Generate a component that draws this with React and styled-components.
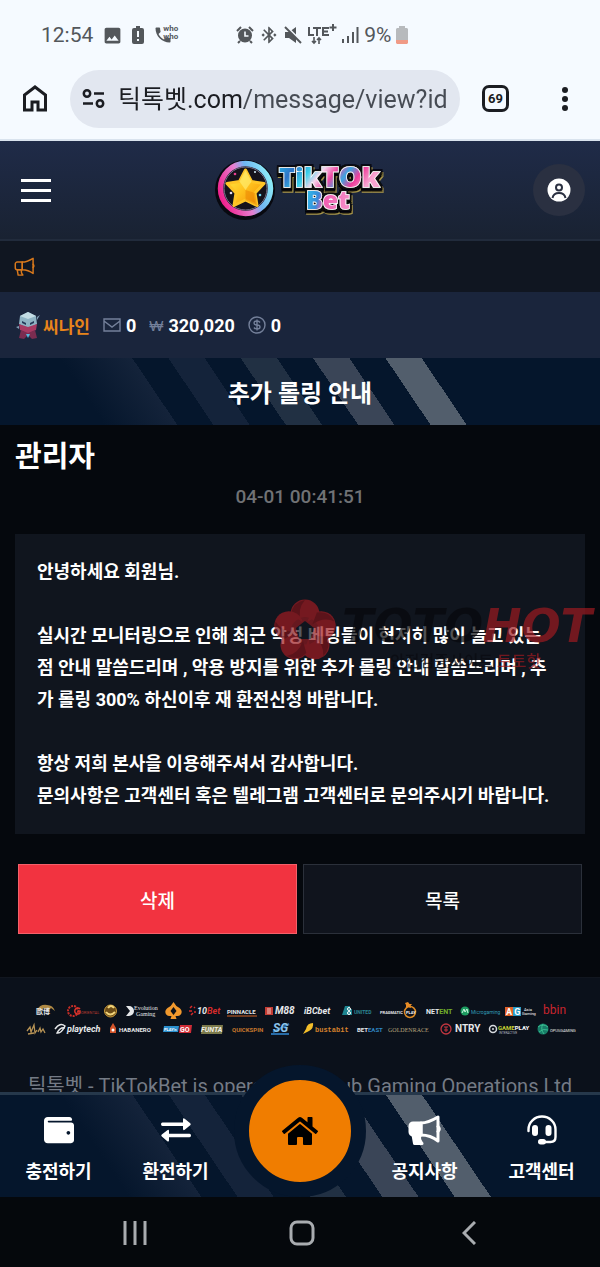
import styled, { createGlobalStyle, css } from 'styled-components';
import { MdBluetoothConnected, MdImage, MdPhone } from 'react-icons/md';
import { FaHome, FaWallet } from 'react-icons/fa';

const GlobalStyle = createGlobalStyle`
  * {
    box-sizing: border-box;
  }

  body {
    margin: 0;
    background: #05080d;
    color: #ffffff;
    font-family: Roboto, "Noto Sans CJK KR", sans-serif;
  }

  button {
    padding: 0;
    border: 0;
    background: none;
    color: inherit;
    font: inherit;
    cursor: pointer;
  }

  a {
    color: inherit;
    text-decoration: none;
  }

  svg {
    display: block;
    flex: none;
  }
`;

// slanted stripes, offset depends on the height of the bar
const stripes = (offset) => css`
  background: linear-gradient(
    56deg,
    #05162c ${offset - 60}px,
    #14233a ${offset}px, #05162c ${offset}px,
    #05162c ${offset + 30}px, #14233a ${offset + 30}px,
    #14233a ${offset + 60}px, #05162c ${offset + 60}px,
    #05162c ${offset + 90}px, #213043 ${offset + 90}px,
    #213043 ${offset + 120}px, #05162c ${offset + 120}px,
    #05162c ${offset + 150}px, #3a4557 ${offset + 150}px,
    #3a4557 ${offset + 180}px, #05162c ${offset + 180}px,
    #05162c ${offset + 210}px, #525e6c ${offset + 210}px,
    #525e6c ${offset + 240}px, #05162c ${offset + 240}px
  );
`;

const Page = styled.div`
  display: flex;
  flex-direction: column;
  min-height: 100vh;
`;

const StatusBar = styled.div`
  display: flex;
  align-items: center;
  height: 70px;
  padding: 0 41px;
  background: #f5faff;
  color: #53575b;
  font-size: 21px;
`;

const StatusGroup = styled.div`
  display: flex;
  align-items: center;
  gap: ${(props) => props.$gap};
  margin-right: 58px;
`;

const CallIcon = styled.span`
  display: flex;
  color: #53575b;
  font-size: 8px;
  font-weight: 700;
  line-height: 8px;

  span {
    margin-left: -10px;
  }
`;

const BrowserBar = styled.div`
  display: flex;
  align-items: center;
  height: 71px;
  padding: 0 32px 12px 23px;
  background: #f5faff;
  border-bottom: 2px solid #d9e3ee;
  color: #1b1d22;
`;

const AddressBox = styled.label`
  display: flex;
  flex: 1;
  align-items: center;
  gap: 13px;
  min-width: 0;
  height: 58px;
  margin: 0 22px 0 23px;
  padding: 0 11px 0 12px;
  border-radius: 29px;
  background: #e2e7f0;
`;

const AddressInput = styled.input`
  flex: 1;
  min-width: 0;
  height: 40px;
  padding: 0 0 4px;
  border: 0;
  outline: 0;
  background: linear-gradient(90deg, #1b1d22 124px, #464b53 124px);
  background-clip: text;
  color: transparent;
  font-family: inherit;
  font-size: 25px;
`;

const TabCount = styled.button`
  width: 27px;
  height: 27px;
  margin-right: 53px;
  border: 3px solid #1b1d22;
  border-radius: 7px;
  font-size: 13px;
  font-weight: 700;
  line-height: 20px;
`;

const Header = styled.header`
  display: flex;
  align-items: center;
  justify-content: space-between;
  height: 100px;
  padding: 0 15px;
  border-bottom: 2px solid #212b3c;
  background: linear-gradient(#1f2b48, #192232);
`;

const MenuButton = styled.button`
  display: flex;
  flex-direction: column;
  gap: 7px;
  width: 52px;
  padding-left: 6px;

  span {
    width: 30px;
    height: 3px;
    background: #ffffff;
  }
`;

const ProfileButton = styled.button`
  display: flex;
  align-items: center;
  justify-content: center;
  width: 52px;
  height: 52px;
  border-radius: 50%;
  background: #2a3041;
`;

const Notice = styled.div`
  display: flex;
  align-items: center;
  height: 51px;
  padding: 0 14px;
  background: #101621;
  color: #d9791c;
`;

const UserBar = styled.div`
  display: flex;
  align-items: center;
  gap: 13px;
  height: 66px;
  padding: 0 16px;
  background: #1a253c;
  font-size: 18px;
  font-weight: 700;
`;

const UserItem = styled.div`
  display: flex;
  align-items: center;
  gap: ${(props) => props.$gap || '5px'};
  color: #ffffff;

  svg {
    color: #74809a;
  }
`;

const UserName = styled.span`
  color: #e8841a;
  font-size: 17px;
`;

const Won = styled.span`
  color: #74809a;
  font-family: "Open Sans", sans-serif;
  font-size: 15px;
  font-weight: 400;
`;

const TitleBar = styled.h1`
  display: flex;
  align-items: center;
  justify-content: center;
  height: 67px;
  margin: 0;
  font-size: 24px;
  font-weight: 700;
  ${stripes(147)}
`;

const Message = styled.main`
  padding: 10px 15px 43px;
`;

const Sender = styled.h2`
  margin: 0;
  font-size: 29px;
  font-weight: 700;
  line-height: 44px;
`;

const SentAt = styled.p`
  margin: 0 0 19px;
  color: #707275;
  font-size: 19px;
  font-weight: 500;
  line-height: 36px;
  text-align: center;
`;

const Card = styled.article`
  position: relative;
  padding: 22px;
  background: #10151e;
`;

const MessageText = styled.p`
  margin: 0;
  font-size: 18px;
  font-weight: 700;
  line-height: 32px;
  white-space: pre-line;
`;

const Watermark = styled.div`
  position: absolute;
  top: 65px;
  right: -7px;
  display: flex;
  gap: 5px;
  opacity: 0.7;
  pointer-events: none;
`;

const WatermarkName = styled.div`
  color: #07080c;
  font-family: "DejaVu Sans", sans-serif;
  font-size: 46px;
  font-style: italic;
  font-weight: 700;
  line-height: 54px;

  b {
    color: #9c1a20;
  }
`;

const WatermarkNote = styled.div`
  color: #0a0b10;
  padding-left: 48px;
  font-size: 16px;
  font-weight: 500;
  line-height: 18px;

  b {
    color: #9c1a20;
    font-weight: 500;
  }
`;

const Actions = styled.div`
  display: flex;
  gap: 6px;
  padding: 30px 3px 0;
`;

const ActionButton = styled.button`
  flex: 1;
  height: 70px;
  border: 1px solid ${(props) => (props.$danger ? '#f5606a' : '#2b303a')};
  background: ${(props) => (props.$danger ? '#f23340' : '#10141d')};
  font-size: 19px;
  font-weight: 500;
`;

const Footer = styled.footer`
  flex: 1;
  padding: 24px 26px 140px;
  border-top: 1px solid #11161f;
  background: #0b111b;
`;

const LogoRow = styled.div`
  display: flex;
  align-items: center;
  justify-content: space-between;
  height: 18px;
  padding: 0 ${(props) => props.$inset};
`;

const Company = styled.p`
  margin: 34px -10px 0;
  color: #747b86;
  font-size: 20px;
  line-height: 28px;
  text-align: center;
`;

const Dock = styled.div`
  position: fixed;
  right: 0;
  bottom: 0;
  left: 0;
`;

const TabBar = styled.nav`
  display: grid;
  grid-template-columns: 1fr 1fr 132px 1fr 1fr;
  height: 105px;
  border-top: 3px solid #26384b;
  ${stripes(167)}
`;

const TabLink = styled.a`
  display: flex;
  flex-direction: column;
  align-items: center;
  gap: 12px;
  padding-top: 20px;
  font-size: 18px;
  font-weight: 700;
  line-height: 30px;

  svg {
    height: 30px;
  }
`;

const HomeLink = styled.a`
  position: relative;
  bottom: 15px;
  display: flex;
  align-items: center;
  justify-content: center;
  align-self: center;
  width: 132px;
  height: 132px;
  margin: -32px 0;
  border: 15px solid #05162c;
  border-radius: 50%;
  background: #f07d00;
  color: #000000;
`;

const SystemBar = styled.div`
  display: flex;
  justify-content: center;
  height: 70px;
  padding: 2px 0 0 4px;
  background: #05080c;
  color: #a9acb0;
`;

const SystemButton = styled.button`
  display: flex;
  align-items: center;
  justify-content: center;
  width: 28%;
`;

const MegaphoneIcon = ({ width, filled }) => (
  <svg width={width} viewBox="0 0 33 30" fill="none" stroke="currentColor" strokeWidth={filled ? 3 : 2.3} strokeLinejoin="round" strokeLinecap="round">
    <path d="M13 8H5a3 3 0 0 0-3 3v6a3 3 0 0 0 3 3h8z" fill={filled ? 'currentColor' : 'none'} />
    <path d="M13 8c7 0 12-3 17-6v24c-5-4-10-6-17-6z" />
    <path d="M30 11.500q2.500 2.500 0 5" />
    <path d="M5 20l1.500 8.500H14c-1.500-2-2.500-3-2.500-5.500l.5-3z" fill={filled ? 'currentColor' : 'none'} />
  </svg>
);

const HeadsetIcon = () => (
  <svg width="30" viewBox="0 0 30 30" fill="none" stroke="currentColor" strokeWidth="2.4" strokeLinecap="round">
    <path d="M1.500 16V14.500a13.500 13 0 0 1 27 0V22q0 5-5 5H16" />
    <rect x="5" y="10" width="6" height="11" rx="3" fill="currentColor" stroke="none" />
    <rect x="18.500" y="10" width="6" height="11" rx="3" fill="currentColor" stroke="none" />
    <rect x="11" y="24" width="8" height="5.500" rx="2.700" fill="currentColor" stroke="none" />
  </svg>
);

const ExchangeIcon = () => (
  <svg width="30" viewBox="0 0 30 30" fill="currentColor">
    <path d="M1.500 7.500H22V4.500q0-2 1.700-.8l5.500 4.600q1 1 0 2l-5.500 4.500q-1.700 1-1.700-1V11H1.500Q0 11 0 9.200T1.500 7.500z" />
    <path d="M28.500 18.800H8V16q0-2-1.700-.8L.8 19.600q-1 1 0 2l5.500 4.600q1.700 1 1.700-1v-2.900h20.500q1.500 0 1.500-1.700t-1.500-1.800z" />
  </svg>
);

const BatteryAlertIcon = () => (
  <svg width="12" height="18" viewBox="0 0 12 18">
    <path d="M4 0h4v2h2q2 0 2 2v12q0 2-2 2H2q-2 0-2-2V4q0-2 2-2h2z" fill="currentColor" />
    <path d="M6 5v6M6 13v2" stroke="#f5faff" strokeWidth="2" />
  </svg>
);

const AlarmIcon = () => (
  <svg width="18" height="18" viewBox="0 0 18 18" fill="none" stroke="currentColor" strokeWidth="2">
    <circle cx="9" cy="9.500" r="7" fill="currentColor" stroke="none" />
    <path d="M1 5l4-4M17 5l-4-4M4 15l-2 2M14 15l2 2" />
    <path d="M9 5.500V10h3.500" stroke="#f5faff" strokeWidth="1.600" />
  </svg>
);

const MuteIcon = () => (
  <svg width="18" height="18" viewBox="0 0 18 18">
    <path d="M1 6h4l7-5v16l-7-5H1z" fill="currentColor" />
    <path d="M2 0l16 16" stroke="#f5faff" strokeWidth="2" />
    <path d="M1 1l16 16" stroke="currentColor" strokeWidth="2" />
  </svg>
);

const SiteLogo = () => (
  <svg width="172" height="62" viewBox="0 0 172 62" overflow="visible" role="img" aria-label="TikTok Bet">
    <defs>
      <linearGradient id="ring" x1="0" y1=".7" x2="1" y2=".3">
        <stop offset="0" stopColor="#f0208c" />
        <stop offset=".45" stopColor="#e77fd0" />
        <stop offset=".65" stopColor="#6fb5f2" />
        <stop offset="1" stopColor="#8cecf8" />
      </linearGradient>
      <linearGradient id="star" x1="0" y1="0" x2="1" y2="1">
        <stop offset="0" stopColor="#fff04a" />
        <stop offset=".5" stopColor="#ffc21e" />
        <stop offset="1" stopColor="#f08a00" />
      </linearGradient>
      <linearGradient id="word" x1="0" y1="0" x2="1" y2=".3">
        <stop offset="0" stopColor="#25c7ea" />
        <stop offset=".22" stopColor="#2f74c8" />
        <stop offset=".38" stopColor="#38d0ea" />
        <stop offset=".5" stopColor="#f6d6ec" />
        <stop offset=".62" stopColor="#f04aa4" />
        <stop offset=".74" stopColor="#3aa5e0" />
        <stop offset=".86" stopColor="#ef3e9a" />
        <stop offset="1" stopColor="#f7a3d0" />
      </linearGradient>
      <linearGradient id="bet" x1="0" y1="0" x2="1" y2=".2">
        <stop offset="0" stopColor="#2ecdf0" />
        <stop offset=".35" stopColor="#3888d8" />
        <stop offset=".5" stopColor="#f05cb0" />
        <stop offset="1" stopColor="#f48ac6" />
      </linearGradient>
      <filter id="outline" x="-20%" y="-20%" width="140%" height="150%">
        <feMorphology in="SourceAlpha" operator="dilate" radius="2" result="fat" />
        <feOffset in="fat" dx="1" dy="3" result="back" />
        <feFlood floodColor="#a8964a" />
        <feComposite in2="back" operator="in" result="gold" />
        <feOffset in="fat" dx="0" dy="2" result="mid" />
        <feFlood floodColor="#07080d" />
        <feComposite in2="mid" operator="in" result="dark" />
        <feFlood floodColor="#07080d" />
        <feComposite in2="fat" operator="in" result="edge" />
        <feMerge>
          <feMergeNode in="gold" />
          <feMergeNode in="dark" />
          <feMergeNode in="edge" />
          <feMergeNode in="SourceGraphic" />
        </feMerge>
      </filter>
    </defs>
    <circle cx="31" cy="31" r="30" fill="#080910" />
    <circle cx="31.500" cy="29.500" r="25" fill="#15131c" stroke="url(#ring)" strokeWidth="5.500" />
    <circle cx="31.500" cy="29.500" r="21.500" fill="none" stroke="#78738c" strokeWidth="1" />
    <path d="M31.500 11l6 11.500 12.500 2-9 9.500 2 12.500-11.500-5.500-11.500 5.500 2-12.500-9-9.500 12.500-2z" fill="url(#star)" stroke="#ffc526" strokeWidth="3" strokeLinejoin="round" />
    <path d="M31.500 11l6 11.500-6 8.500-6-8.500z" fill="#fff27a" opacity=".6" />
    <path d="M31.500 31l9.500 3 2 12.500-11.500-5.500z" fill="#e97f00" opacity=".5" />
    <circle cx="21" cy="15" r="1.300" fill="#e83f90" />
    <circle cx="41" cy="13" r="1" fill="#d7f2ff" />
    <circle cx="17" cy="34" r="1.300" fill="#e4dcf0" />
    <circle cx="46" cy="36" r="1.300" fill="#6fd6f3" />
    <g fontFamily="Open Sans, sans-serif" fontWeight="800" stroke="#ffffff" strokeWidth="1.500" paintOrder="stroke" filter="url(#outline)">
      <text x="65" y="28" fontSize="27" fill="url(#word)">Tik<tspan fontSize="29">TO</tspan>k</text>
      <text x="92" y="50" fontSize="25" fill="url(#bet)">Bet</text>
    </g>
  </svg>
);

const Avatar = () => (
  <svg width="24" height="30" viewBox="1 0 24 30">
    <path d="M5 6l8-4 8 4 1 8-9 5-9-5z" fill="#8fb4c4" />
    <path d="M5 6l8-4 8 4-8 3z" fill="#c3dce4" />
    <path d="M4 14l9 3 9-3-1 6-8 4-8-4z" fill="#a83a63" />
    <path d="M6 20l7 3 7-3 2 8-5 1-4-4-4 4-5-1z" fill="#7b2c50" />
    <path d="M7 11l4 2v2l-4-2zM19 11l-4 2v2l4-2z" fill="#243a58" />
    <path d="M11 24l2 4 2-4z" fill="#57b7dc" />
    <path d="M1 17l3-1v3zM25 5l-3 2v3z" fill="#7f9db4" />
  </svg>
);

const WatermarkMark = () => (
  <svg width="64" height="64" viewBox="-32 -32 64 64">
    {[0, 72, 144, 216, 288].map((angle) => (
      <g key={angle} transform={`rotate(${angle})`}>
        <circle cx="0" cy="-17" r="14.500" fill="#a01c22" />
        <path d="M-9-10q9-8 18 0L6 0h-12z" fill="#8c1a20" />
        <path d="M-14-17q2-12 14-14Q-8-22-4-9z" fill="#7c1319" />
      </g>
    ))}
    <path d="M0-10L9-3 6 8h-12l-3-11z" fill="#10151e" />
  </svg>
);

// one game provider: optional symbol followed by its name
const Provider = ({ width, name, size = 8, color = '#e6e8ea', x = 0, family = 'Roboto', italic, bold, children }) => (
  <svg width={width} height="18" viewBox={`0 0 ${width} 18`} overflow="visible">
    {children}
    {name && (
      <text x={x} y="12" fill={color} fontSize={size} fontFamily={`${family}, sans-serif`} fontWeight={bold ? 700 : 400} fontStyle={italic ? 'italic' : 'normal'}>
        {name}
      </text>
    )}
  </svg>
);

const messageBody = `안녕하세요 회원님.

실시간 모니터링으로 인해 최근 악성 베팅들이 현저히 많이 늘고 있는
점 안내 말씀드리며 , 악용 방지를 위한 추가 롤링 안내 말씀드리며 , 추
가 롤링 300% 하신이후 재 환전신청 바랍니다.

항상 저희 본사을 이용해주셔서 감사합니다.
문의사항은 고객센터 혹은 텔레그램 고객센터로 문의주시기 바랍니다.`;

const Providers = () => (
  <>
    <LogoRow $inset="8px">
      <Provider width={24} name="歐博" size={7} family="Noto Sans CJK SC" bold x={2}>
        <path d="M3 8Q6 2 13 3q6 0 8 6l-4-3-3 3-4-3-4 3z" fill="#b08a45" />
      </Provider>
      <Provider width={30} name="ORIENTAL" size={4} color="#b83a30" x={15}>
        <circle cx="7" cy="9" r="5" fill="none" stroke="#c62d27" strokeWidth="2" strokeDasharray="2 1" />
        <path d="M14 7a3 3 0 1 0 0 4V9h-2" fill="none" stroke="#d9342b" strokeWidth="1.500" />
      </Provider>
      <Provider width={15}>
        <circle cx="7.500" cy="9" r="6" fill="#6c4c16" stroke="#c99a39" />
        <path d="M3 10q4 5 9 0M5 6q3-4 6 0" fill="none" stroke="#f3d67b" strokeWidth="2" />
      </Provider>
      <Provider width={31} x={8}>
        <path d="M0 4h3a5 5 0 0 1 0 10H0l4-5z" fill="#e6e8ea" />
        <text x="8" y="8" fill="#e6e8ea" fontSize="6" fontFamily="Liberation Serif, serif">Evolution</text>
        <text x="10" y="14" fill="#e6e8ea" fontSize="6" fontFamily="Liberation Serif, serif">Gaming</text>
      </Provider>
      <Provider width={17}>
        <path d="M8.500 0q2 4 6 6c4 3 2 8-2 8h-2l1 3h-6l1-3h-2c-4 0-6-5-2-8q4-2 6-6z" fill="#f0982d" />
        <path d="M8.500 5l3 4-3 4-3-4z" fill="#0b111b" />
      </Provider>
      <Provider width={30} x={8} name={<>10<tspan fill="#d52b2b">Bet</tspan></>} size={9} italic bold>
        <path d="M1 6l2-2M0 9h3M2 13l2-2M5 5l1 1M5 10h2" stroke="#d52b2b" strokeWidth="1.500" />
      </Provider>
      <Provider width={31} name="PINNACLE" size={6} bold>
        <path d="M0 14h30" stroke="#d66425" strokeWidth="1" />
      </Provider>
      <Provider width={31} name="M88" size={10} x={10} italic bold>
        <rect y="5" width="8" height="8" fill="#c33c34" />
        <path d="M2 7h4M2 9h4M2 11h4" stroke="#f0c9c0" />
      </Provider>
      <Provider width={30} name="iBCbet" size={9} italic bold />
      <Provider width={31} name="UNITED" size={5} color="#2b8791" x={12} bold>
        <path d="M0 13l3-9h5v3h2v6z" fill="#1d8490" />
        <circle cx="7" cy="7" r="1.500" fill="none" stroke="#fff" />
        <circle cx="7" cy="11" r="1.500" fill="none" stroke="#fff" />
      </Provider>
      <Provider width={38} name="PRAGMATIC" size={4} bold>
        <circle cx="30" cy="10" r="5.500" fill="none" stroke="#dd8a25" strokeWidth="1.500" />
        <path d="M28 0l1.500 2H32l-1.500 2 .5 2-3-1-2 1V3l-1-2z" fill="#e98c25" />
        <text x="26" y="12" fill="#fff" fontSize="4" fontFamily="Roboto, sans-serif" fontWeight="700">PLAY</text>
      </Provider>
      <Provider width={26} name={<>NET<tspan fill="#71ad2b">ENT</tspan></>} size={7} bold />
      <Provider width={38} name="Microgaming" size={5} color="#309ab4" x={11}>
        <circle cx="5" cy="9" r="4.500" fill="#1c9c60" />
        <path d="M2 11l2-4 1 3 2-3 1 4" fill="none" stroke="#c9f4dd" />
      </Provider>
      <Provider width={30}>
        <rect y="5" width="8" height="9" fill="#df6027" />
        <rect x="8" y="5" width="8" height="9" fill="#2b9bc4" />
        <text x="1" y="13" fill="#fff" fontSize="9" fontFamily="Roboto, sans-serif" fontWeight="700">A G</text>
        <text x="19" y="9" fill="#fff" fontSize="4" fontFamily="Roboto, sans-serif">Asia</text>
        <text x="17" y="13" fill="#fff" fontSize="4" fontFamily="Roboto, sans-serif">Gaming</text>
      </Provider>
      <Provider width={23} name="bbin" size={12} color="#c9252e" />
    </LogoRow>
    <LogoRow $inset="0px">
      <Provider width={20}>
        <path d="M1 11l3-4 1 5 3-7 1 8 2-3M12 12l2-4 1 4 2-3 2 4M2 14l6-1" fill="none" stroke="#b79355" strokeWidth="1.300" />
      </Provider>
      <Provider width={46} name="playtech" size={9} x={12} italic bold>
        <path d="M0 9q5-7 10-3-4 8-8 7 3-6 8-5" fill="none" stroke="#e6e8ea" strokeWidth="1.500" />
      </Provider>
      <Provider width={45} name="HABANERO" size={6} x={10} bold>
        <path d="M4 3l3 5v5H1V8z" fill="#d2542a" />
        <circle cx="4" cy="10" r="1.500" fill="#fff" />
      </Provider>
      <Provider width={30}>
        <path d="M1 6h15l-1 6H0z" fill="#2a8fce" />
        <path d="M17 5h12l-1 8H16z" fill="#d02c37" />
        <text x="1" y="11" fill="#fff" fontSize="4" fontFamily="Roboto, sans-serif" fontWeight="700">PLAY'n</text>
        <text x="17" y="12" fill="#fff" fontSize="7" fontFamily="Roboto, sans-serif" fontWeight="700">GO</text>
      </Provider>
      <Provider width={22} name="FUNTA" size={7} color="#f2f1e6" italic bold>
        <path d="M1 5h21l-1 9H0z" fill="#7c7b4c" />
      </Provider>
      <Provider width={31} name="QUICKSPIN" size={6} color="#c7782d" bold />
      <Provider width={22} name="SG" size={12} color="#8cc3ea" x={2} italic bold>
        <path d="M2 12l16-8M0 14h18" stroke="#276ca8" strokeWidth="2" />
      </Provider>
      <Provider width={46} name="bustabit" size={7} color="#d6812d" x={13} family="Liberation Mono" bold>
        <path d="M1 14l3-5q1-6 7-6 1 5-4 8z" fill="#f3be2a" />
      </Provider>
      <Provider width={23} name={<>BET<tspan fill="#2f88c4">EAST</tspan></>} size={6} bold />
      <Provider width={43} name="GOLDENRACE" size={6} color="#b6a37a" family="Liberation Serif" />
      <Provider width={41} name="NTRY" size={10} x={15} bold>
        <circle cx="6" cy="9" r="5" fill="none" stroke="#c33640" strokeWidth="1.300" />
        <path d="M4 7h4M6 7v5M4 10h4" stroke="#c33640" />
      </Provider>
      <Provider width={39}>
        <circle cx="4" cy="9" r="3.500" fill="none" stroke="#d8dce0" strokeWidth="1.500" />
        <circle cx="4" cy="9" r="1" fill="#d8dce0" />
        <text x="9" y="10" fill="#c5cf31" fontSize="6" fontFamily="Roboto, sans-serif" fontWeight="700">GAME<tspan fill="#fff">PLAY</tspan></text>
        <text x="10" y="14" fill="#b7bdc4" fontSize="3" fontFamily="Roboto, sans-serif">INTERACTIVE</text>
      </Provider>
      <Provider width={37} name="OPUSGAMING" size={4} x={13}>
        <circle cx="6" cy="9" r="5.500" fill="#187d68" />
        <path d="M1 7q5-4 10 0M2 12q4-4 9-2M6 4q-3 5 1 10" fill="none" stroke="#39bd8f" />
      </Provider>
    </LogoRow>
  </>
);

const App = () => {
  return (
    <>
      <GlobalStyle />
      <Page>
        <StatusBar>
          <StatusGroup $gap="9px">
            <span>12:54</span>
            <MdImage size={21} />
            <BatteryAlertIcon />
            <CallIcon>
              <MdPhone size={20} />
              <span>who<br />who</span>
            </CallIcon>
          </StatusGroup>
          <StatusGroup $gap="5px">
            <AlarmIcon />
            <MdBluetoothConnected size={20} />
            <MuteIcon />
            <svg width="30" height="22" viewBox="0 0 30 22" fill="none" stroke="currentColor" strokeWidth="2">
              <path d="M2 3v8h5M6 4h8M10 4v8M22 4h-6v7h6M16 7.500h5M26 0v7M22.500 3.500h7" />
              <path d="M7 13v6M5 17l2 2 2-2M12 20v-6M10 16l2-2 2 2" strokeWidth="1.600" />
            </svg>
            <svg width="17" height="18" viewBox="0 0 17 18" stroke="currentColor" strokeWidth="2">
              <path d="M1 17v-4M6 17v-7M11 17V6M15.500 17V1" />
            </svg>
            <span>9%</span>
            <svg width="12" height="18" viewBox="0 0 12 18">
              <path d="M3 0h6v2h2l1 1v12H0V3l1-1h2z" fill="#b7babd" />
              <path d="M0 14h12v3l-1 1H1l-1-1z" fill="#f09a86" />
            </svg>
          </StatusGroup>
        </StatusBar>
        <BrowserBar>
          <button aria-label="Home">
            <svg width="24" height="27" viewBox="0 0 24 27" fill="none" stroke="currentColor" strokeWidth="3">
              <path d="M1.500 25V10L12 2l10.500 8v15H15v-8H9v8z" />
            </svg>
          </button>
          <AddressBox>
            <svg width="23" height="20" viewBox="0 0 23 20" fill="none" stroke="currentColor" strokeWidth="2.500">
              <circle cx="5" cy="4.500" r="3.200" />
              <path d="M12 4.500h10M1 14.500h10" />
              <circle cx="18" cy="14.500" r="3.200" />
            </svg>
            <AddressInput aria-label="Address" defaultValue="틱톡벳.com/message/view?id" />
          </AddressBox>
          <TabCount>69</TabCount>
          <button aria-label="More">
            <svg width="6" height="24" viewBox="0 0 6 24" fill="currentColor">
              <circle cx="3" cy="3" r="3" />
              <circle cx="3" cy="12" r="3" />
              <circle cx="3" cy="21" r="3" />
            </svg>
          </button>
        </BrowserBar>

        <Header>
          <MenuButton aria-label="Menu">
            <span />
            <span />
            <span />
          </MenuButton>
          <a href="#home"><SiteLogo /></a>
          <ProfileButton aria-label="Profile">
            <svg width="24" height="24" viewBox="0 0 24 24">
              <circle cx="12" cy="12" r="11.500" fill="#ffffff" />
              <circle cx="12" cy="9.500" r="3" fill="none" stroke="#2a3041" strokeWidth="2" />
              <path d="M5.500 20q1-5 6.500-5t6.500 5" fill="none" stroke="#2a3041" strokeWidth="2" />
            </svg>
          </ProfileButton>
        </Header>
        <Notice>
          <MegaphoneIcon width={21} />
        </Notice>
        <UserBar>
          <UserItem $gap="3px">
            <Avatar />
            <UserName>씨나인</UserName>
          </UserItem>
          <UserItem>
            <svg width="18" height="14" viewBox="0 0 18 14" fill="none" stroke="currentColor" strokeWidth="1.400">
              <path d="M1 1h16v12H1zM1 3l8 6 8-6" />
            </svg>
            <span>0</span>
          </UserItem>
          <UserItem>
            <Won>₩</Won>
            <span>320,020</span>
          </UserItem>
          <UserItem>
            <svg width="18" height="18" viewBox="0 0 18 18" fill="none" stroke="currentColor" strokeWidth="1.400">
              <circle cx="9" cy="9" r="8" />
              <path d="M12 6.500Q11 5 9 5 6 5 6 7t3 2 3 2-3 2q-2 0-3-1.500M9 3.500v11" />
            </svg>
            <span>0</span>
          </UserItem>
        </UserBar>
        <TitleBar>추가 롤링 안내</TitleBar>

        <Message>
          <Sender>관리자</Sender>
          <SentAt>04-01 00:41:51</SentAt>
          <Card>
            <MessageText>{messageBody}</MessageText>
            <Watermark>
              <WatermarkMark />
              <div>
                <WatermarkName>TOTO<b>HOT</b></WatermarkName>
                <WatermarkNote>안전검증사이트 <b>토토핫</b></WatermarkNote>
              </div>
            </Watermark>
          </Card>
          <Actions>
            <ActionButton $danger>삭제</ActionButton>
            <ActionButton>목록</ActionButton>
          </Actions>
        </Message>

        <Footer>
          <Providers />
          <Company>틱톡벳 - TikTokBet is operated by Club Gaming Operations Ltd</Company>
        </Footer>
      </Page>

      <Dock>
        <TabBar>
          <TabLink href="#deposit">
            <FaWallet size={30} />
            충전하기
          </TabLink>
          <TabLink href="#exchange">
            <ExchangeIcon />
            환전하기
          </TabLink>
          <HomeLink href="#home" aria-label="Home">
            <FaHome size={36} />
          </HomeLink>
          <TabLink href="#notice">
            <MegaphoneIcon width={33} filled />
            공지사항
          </TabLink>
          <TabLink href="#support">
            <HeadsetIcon />
            고객센터
          </TabLink>
        </TabBar>
        <SystemBar>
          <SystemButton aria-label="Recent apps">
            <svg width="24" height="24" viewBox="0 0 24 24" stroke="currentColor" strokeWidth="3">
              <path d="M2 0v24M12 0v24M22 0v24" />
            </svg>
          </SystemButton>
          <SystemButton aria-label="Home screen">
            <svg width="26" height="26" viewBox="0 0 26 26" fill="none" stroke="currentColor" strokeWidth="3">
              <rect x="2" y="2" width="22" height="22" rx="6" />
            </svg>
          </SystemButton>
          <SystemButton aria-label="Back">
            <svg width="14" height="24" viewBox="0 0 14 24" fill="none" stroke="currentColor" strokeWidth="3">
              <path d="M13 1L2 12l11 11" />
            </svg>
          </SystemButton>
        </SystemBar>
      </Dock>
    </>
  );
};

export default App;
